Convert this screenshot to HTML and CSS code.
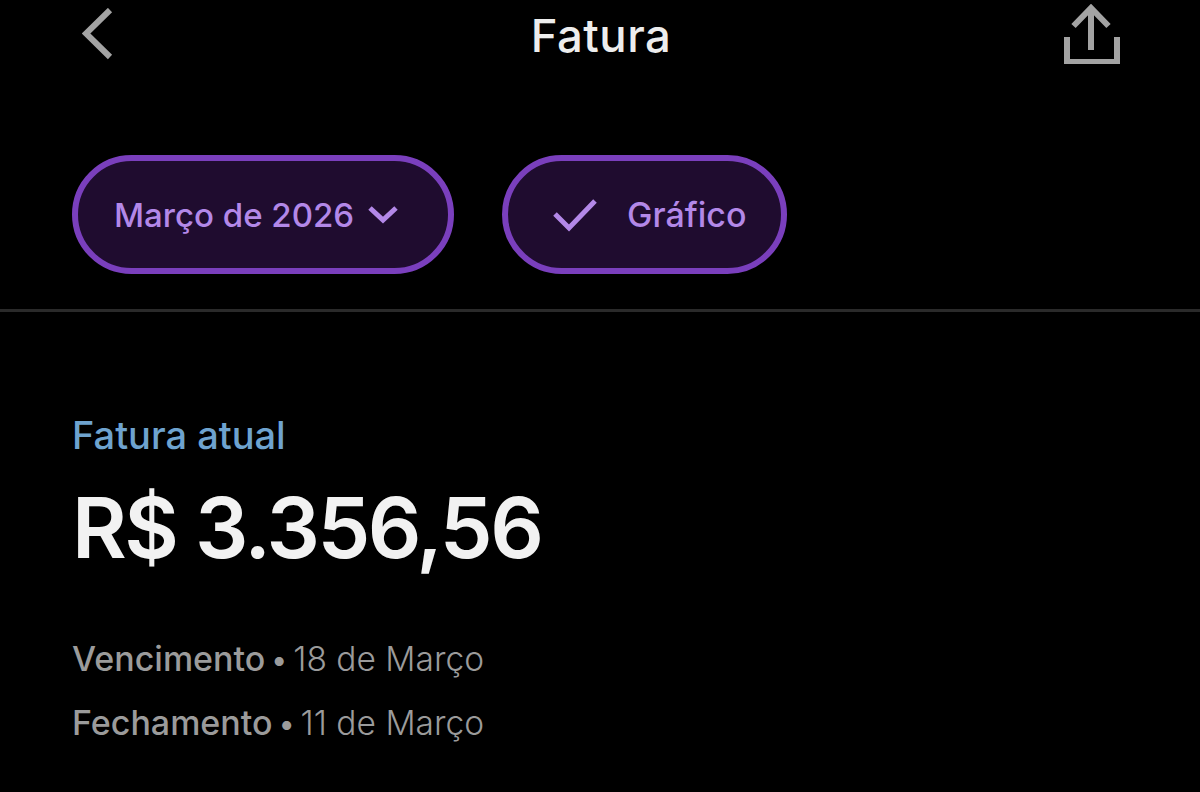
FILE: index.html
```html
<!DOCTYPE html>
<html lang="pt-BR">
  <head>
    <meta name="viewport" content="width=device-width" />
    <title>Fatura</title>
    <link rel="stylesheet" href="styles.css">
  </head>
  <body>
    <header class="topbar">
      <button class="icon-button back">
        <svg width="32" height="52" viewBox="0 0 32 52">
          <path d="M28 2 L4 25.5 L28 49" />
        </svg>
      </button>
      <h1 class="title">Fatura</h1>
      <button class="icon-button share">
        <svg width="56" height="60" viewBox="0 0 56 60">
          <path d="M27 46 V5 M9.5 22 L27 4 L44.5 22 M3 33 V58 H53 V33" />
        </svg>
      </button>
    </header>

    <nav class="filters">
      <button class="chip chip-month">
        <span>Março de 2026</span>
        <svg width="32" height="20" viewBox="0 0 32 20">
          <path d="M3 3 L16 15 L29 3" />
        </svg>
      </button>
      <button class="chip chip-chart">
        <svg width="46" height="36" viewBox="0 0 46 36">
          <path d="M3 17 L17 31 L43 4" />
        </svg>
        <span>Gráfico</span>
      </button>
    </nav>

    <main class="summary">
      <p class="label">Fatura atual</p>
      <p class="amount">R$ 3.356,56</p>
      <ul class="dates">
        <li><strong>Vencimento</strong><span class="dot">•</span>18 de Março</li>
        <li><strong>Fechamento</strong><span class="dot">•</span>11 de Março</li>
      </ul>
    </main>
  </body>
</html>
```

FILE: styles.css
```css
* {
  box-sizing: border-box;
}

html,
body {
  height: 100%;
}

body {
  margin: 0;
  overflow: hidden;
  background-color: #000;
  font-family: Inter, "Liberation Sans", sans-serif;
}

button {
  font: inherit;
  background: none;
  border: 0;
  padding: 0;
}

svg {
  display: block;
  fill: none;
}

.topbar {
  display: grid;
  grid-template-columns: 1fr auto 1fr;
  align-items: start;
  height: 155px;
  padding: 8px 80px 0 82px;
}

.icon-button svg {
  stroke: #a3a3a3;
  stroke-width: 6;
}

.share {
  justify-self: end;
  margin-top: -4px;
}

.back {
  justify-self: start;
}

.title {
  margin: 0;
  padding-top: 3px;
  color: #ededed;
  font-size: 45.5px;
  line-height: 50px;
  font-weight: 500;
  letter-spacing: 0.5px;
}

.filters {
  display: flex;
  gap: 48px;
  height: 157px;
  padding-left: 72px;
  border-bottom: 3px solid #2a2a2a;
}

.chip {
  display: flex;
  align-items: center;
  height: 119px;
  border: 6px solid #7a3fbd;
  border-radius: 60px;
  background-color: #1f0c2f;
  color: #b388e8;
  font-size: 33px;
  font-weight: 500;
}

.chip svg {
  stroke: #b388e8;
  stroke-width: 5;
}

.chip-month {
  width: 382px;
  padding-left: 36px;
  gap: 13px;
}

.chip-chart {
  width: 285px;
  padding-left: 44px;
  gap: 29px;
}

.chip-chart span {
  font-size: 34px;
}

.summary {
  padding: 101px 0 0 72px;
}

.label {
  margin: 0;
  color: #6ea3cf;
  font-size: 38px;
  line-height: 44px;
  font-weight: 500;
}

.amount {
  margin: 21px 0 0;
  color: #f2f2f2;
  font-size: 84px;
  line-height: 100px;
  font-weight: 600;
  letter-spacing: -2.5px;
}

.dates {
  margin: 49px 0 0;
  padding: 0;
  list-style: none;
  color: #9b9b9b;
  font-size: 33.5px;
  line-height: 63px;
  font-weight: 300;
}

.dates strong {
  font-size: 34px;
  font-weight: 500;
}

.dot {
  display: inline-block;
  width: 28px;
  text-align: center;
}
```
